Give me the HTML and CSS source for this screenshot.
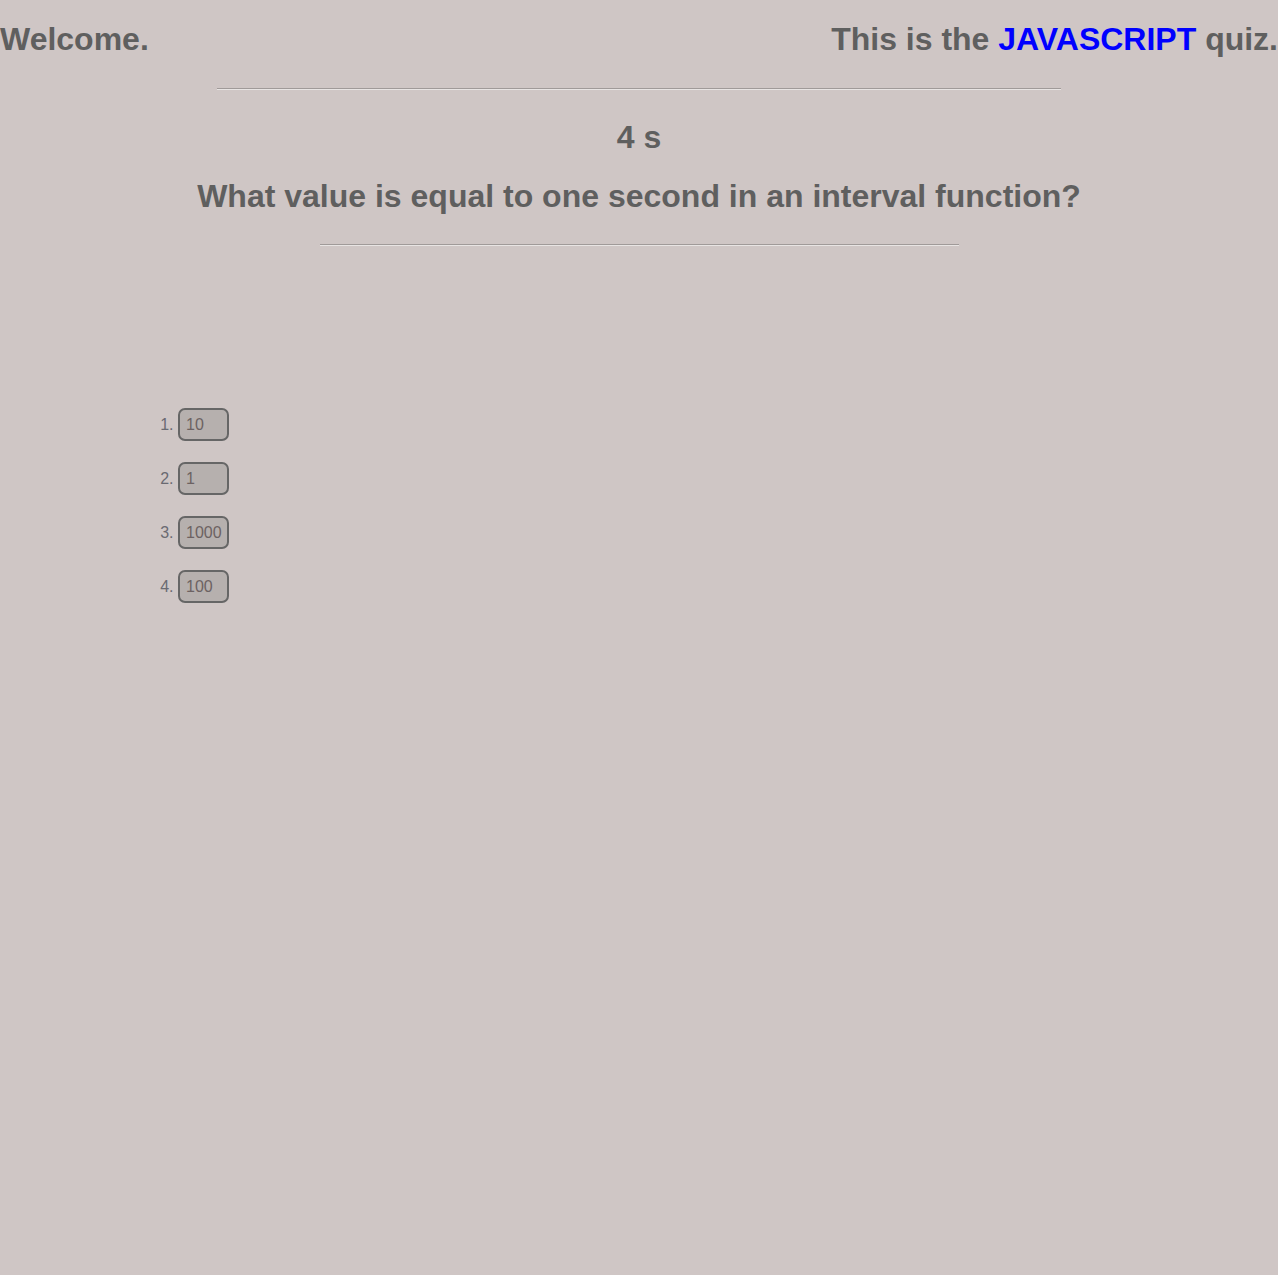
FILE: index.html
```html
<!DOCTYPE html>
<html>
<head>
<meta charset="utf-8">
<link rel="stylesheet" href="styles.css">
</head>
<body>
<header class="top">
  <h1 class="welcome">Welcome.</h1>
  <h1 class="title">This is the <span class="lang">JAVASCRIPT</span> quiz.</h1>
</header>
<hr class="rule-wide">
<main class="quiz">
  <h2 class="timer">4 s</h2>
  <h2 class="question">What value is equal to one second in an interval function?</h2>
  <hr class="rule-narrow">
  <ol class="answers">
    <li class="answer"><button class="choice">10</button></li>
    <li class="answer"><button class="choice">1</button></li>
    <li class="answer"><button class="choice">1000</button></li>
    <li class="answer"><button class="choice">100</button></li>
  </ol>
</main>
</body>
</html>
```

FILE: styles.css
```css
html, body {
  margin: 0;
  padding: 0;
  background: #cfc6c5;
  color: #5f5f5f;
  font-family: "Liberation Sans", Arial, sans-serif;
}
.top {
  display: flex;
  justify-content: space-between;
  align-items: baseline;
}
.welcome, .title {
  font-size: 32px;
  font-weight: bold;
  margin: 21px 0;
  line-height: 37px;
}
.lang {
  color: #0000ff;
}
.rule-wide {
  width: 66%;
  margin: 9px auto 0;
  border: none;
  border-top: 1px solid #a09a99;
  border-bottom: 1px solid #e8e4e3;
  height: 0;
}
.quiz {
  text-align: center;
}
.timer {
  font-size: 32px;
  margin: 29px 0 0;
  line-height: 37px;
}
.question {
  font-size: 32px;
  margin: 22px 0 0;
  line-height: 37px;
}
.rule-narrow {
  width: 50%;
  margin: 29px auto 0;
  border: none;
  border-top: 1px solid #a09a99;
  border-bottom: 1px solid #e8e4e3;
  height: 0;
}
.answers {
  text-align: left;
  margin: 162px 0 0 178px;
  padding: 0;
}
.answer {
  font-size: 16px;
  color: #6a6a72;
  line-height: 33px;
  margin-bottom: 21px;
}
.choice {
  width: 51px;
  height: 33px;
  box-sizing: border-box;
  border: 2px solid #666;
  border-radius: 7px;
  background: #b6b0ae;
  color: #6c6262;
  font-family: "Liberation Sans", Arial, sans-serif;
  font-size: 16px;
  line-height: 29px;
  text-align: left;
  padding: 0 6px;
  vertical-align: top;
}
```
